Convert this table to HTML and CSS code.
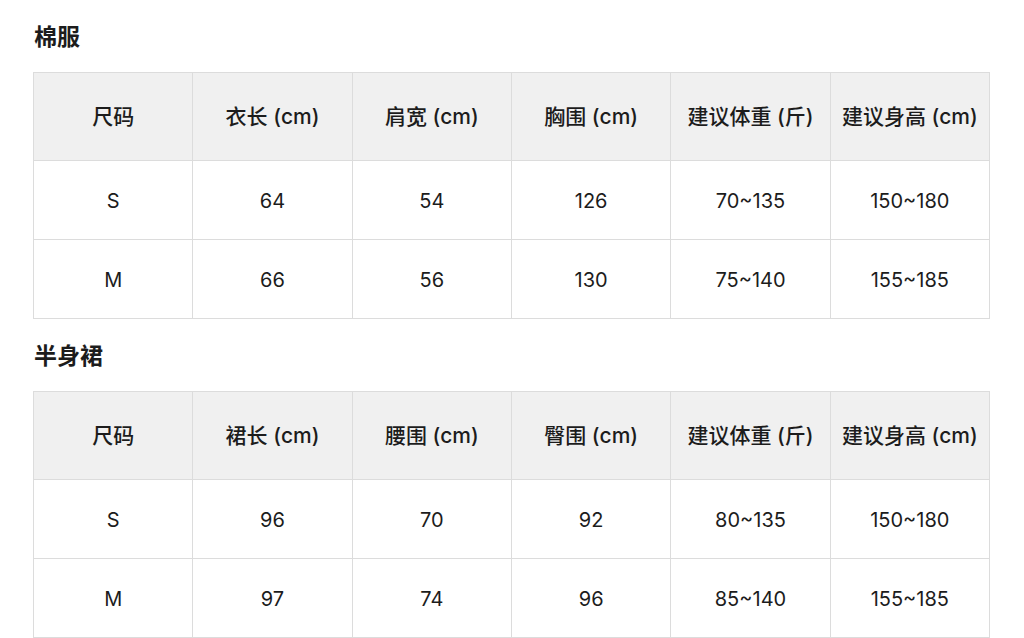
FILE: index.html
```html
<!DOCTYPE html>
<html lang="zh-CN">
<head>
<meta charset="utf-8">
<link rel="stylesheet" href="styles.css">
</head>
<body>
<div class="page">
  <section class="block">
    <h2 class="title">棉服</h2>
    <table class="size-table">
      <thead>
        <tr><th>尺码</th><th>衣长 (cm)</th><th>肩宽 (cm)</th><th>胸围 (cm)</th><th>建议体重 (斤)</th><th>建议身高 (cm)</th></tr>
      </thead>
      <tbody>
        <tr><td>S</td><td>64</td><td>54</td><td>126</td><td>70~135</td><td>150~180</td></tr>
        <tr><td>M</td><td>66</td><td>56</td><td>130</td><td>75~140</td><td>155~185</td></tr>
      </tbody>
    </table>
  </section>
  <section class="block block-next">
    <h2 class="title">半身裙</h2>
    <table class="size-table">
      <thead>
        <tr><th>尺码</th><th>裙长 (cm)</th><th>腰围 (cm)</th><th>臀围 (cm)</th><th>建议体重 (斤)</th><th>建议身高 (cm)</th></tr>
      </thead>
      <tbody>
        <tr><td>S</td><td>96</td><td>70</td><td>92</td><td>80~135</td><td>150~180</td></tr>
        <tr><td>M</td><td>97</td><td>74</td><td>96</td><td>85~140</td><td>155~185</td></tr>
      </tbody>
    </table>
  </section>
</div>
</body>
</html>
```

FILE: styles.css
```css
html, body {
  margin: 0;
  padding: 0;
  background: #ffffff;
}

body {
  font-family: "Inter", "Noto Sans CJK SC", sans-serif;
  color: #1c1c1c;
}

.page {
  padding: 19px 34px 0 33px;
}

.title {
  margin: 0 0 21px 1px;
  font-size: 23px;
  line-height: 32px;
  font-weight: 700;
  font-family: "Noto Sans CJK SC", sans-serif;
}

.block-next {
  margin-top: 19px;
}

.size-table {
  width: 957px;
  table-layout: fixed;
  border-collapse: collapse;
}

.size-table th,
.size-table td {
  border: 1px solid #dcdcdc;
  text-align: center;
  padding: 0;
  font-size: 20px;
}

.size-table th {
  height: 88px;
  padding-bottom: 3px;
  box-sizing: border-box;
  background: #f0f0f0;
  font-weight: 500;
  font-size: 21px;
}

.size-table td {
  height: 79px;
  padding-top: 1px;
  box-sizing: border-box;
  font-weight: 400;
}
```
